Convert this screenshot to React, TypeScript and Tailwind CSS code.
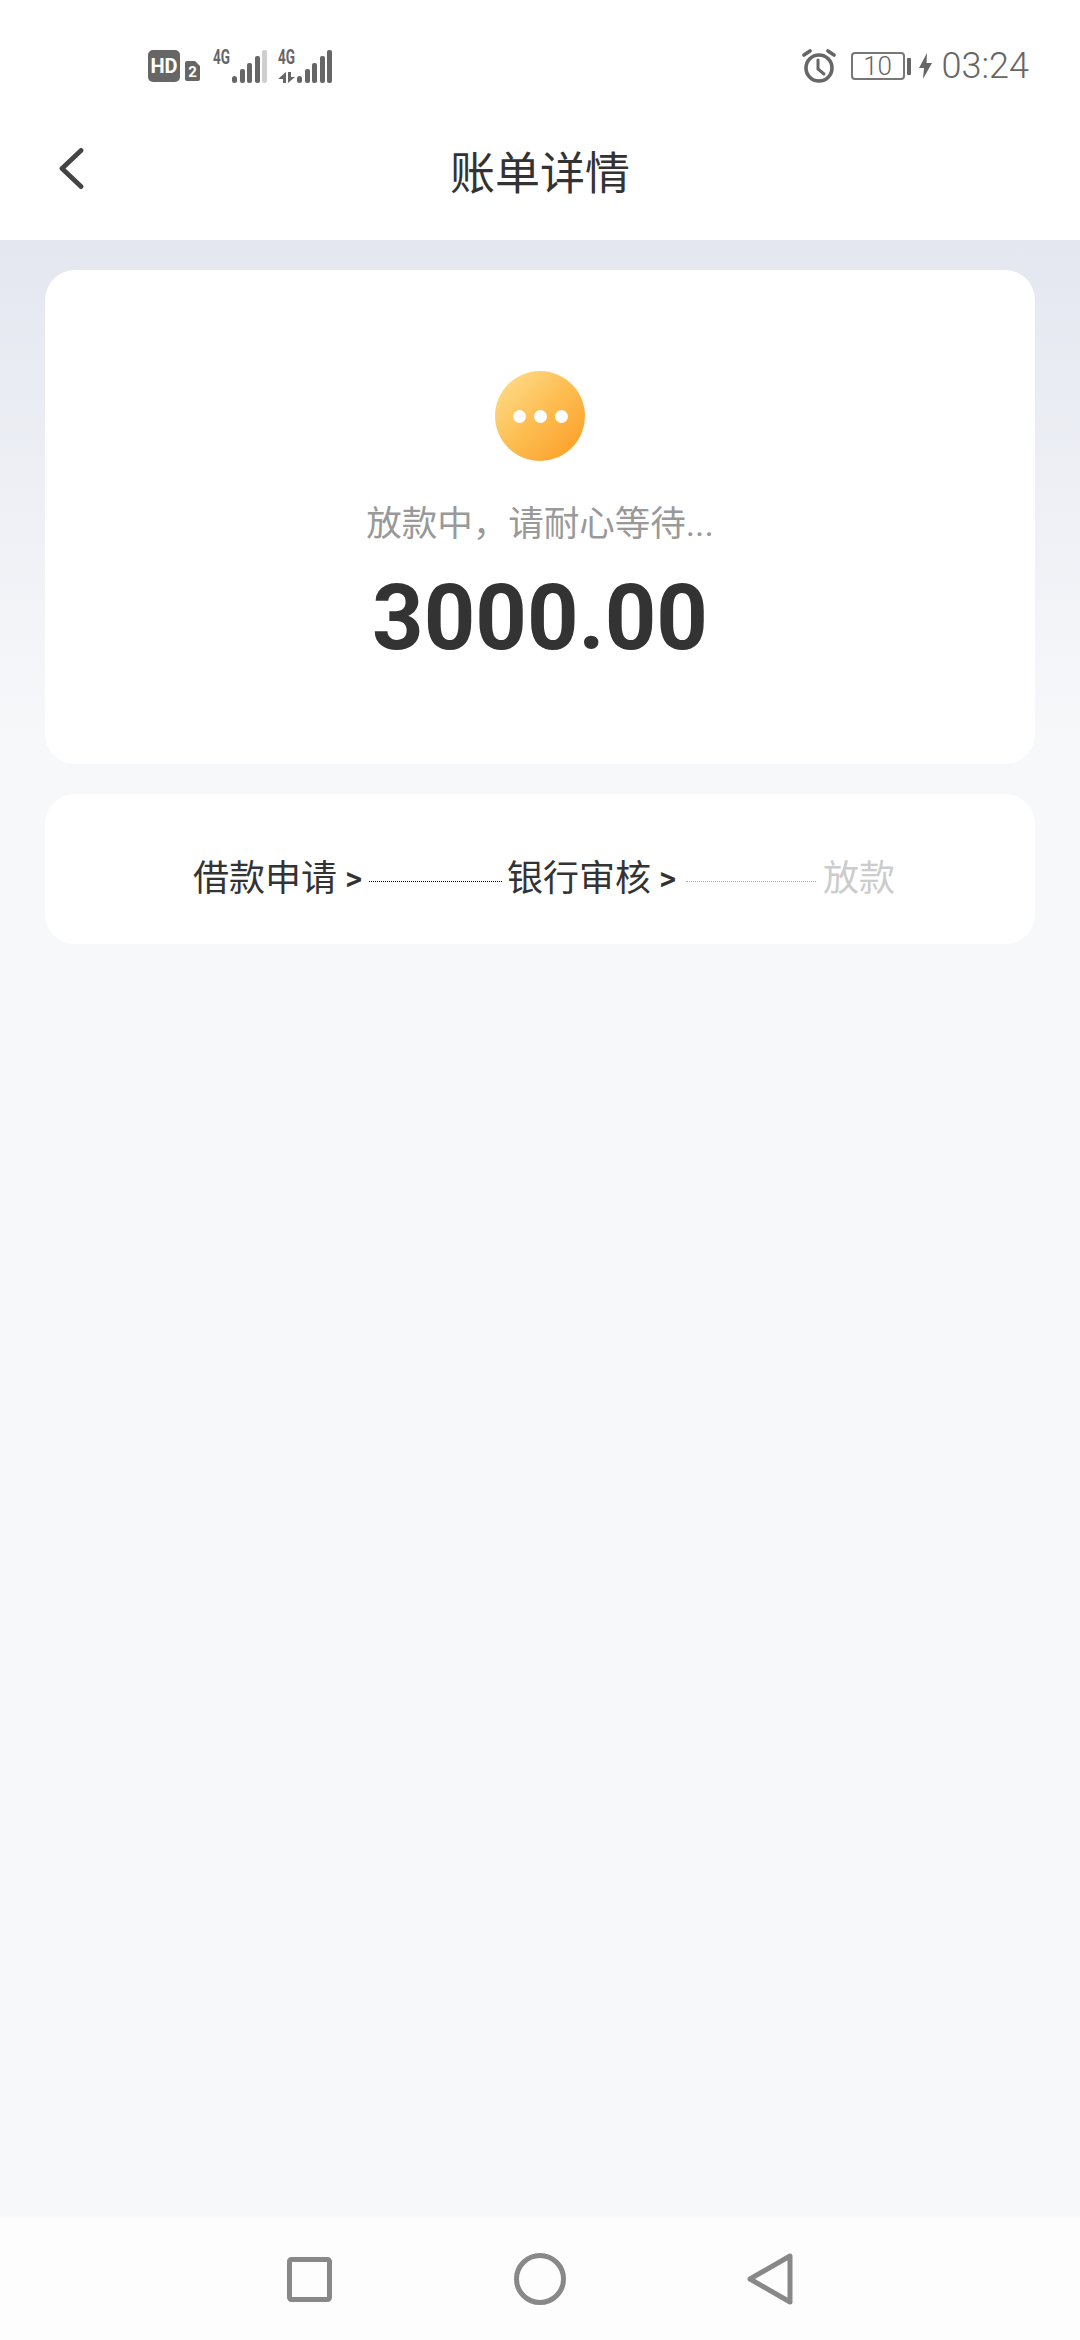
import React from 'react';

const CJK = "font-['Noto_Sans_CJK_SC','Noto_Sans',sans-serif]";

const SignalBars: React.FC<{ lastDim?: boolean; arrows?: boolean }> = ({ lastDim, arrows }) => (
  <svg width="54" height="46" viewBox="0 -4 54 46" fill="none">
    <text x="0" y="17" fontFamily="Roboto, sans-serif" fontSize="20" fontWeight="700" fill="#666" textLength="17" lengthAdjust="spacingAndGlyphs">4G</text>
    {arrows && (
      <g fill="#666">
        <path d="M0 32l8-7v11H5v-4z" />
        <path d="M10 25h3v5h4l-7 6z" />
      </g>
    )}
    <g fill="#666">
      <rect x="19" y="29" width="5" height="7" rx="2.5" />
      <rect x="27" y="22" width="5" height="14" rx="2" />
      <rect x="34" y="16" width="5" height="20" rx="2" />
      <rect x="42" y="9" width="5" height="27" rx="2" />
      <rect x="49" y="3" width="5" height="33" rx="2" fill={lastDim ? '#cfcfcf' : '#666'} />
    </g>
  </svg>
);

const StatusBar: React.FC = () => (
  <div className="flex h-[132px] items-center justify-between pl-[148px] pr-[51px]">
    <div className="flex items-center">
      <svg width="52" height="34" viewBox="0 0 52 34">
        <rect x="0" y="1" width="32" height="32" rx="5" fill="#666" />
        <text x="16" y="24" textAnchor="middle" fontFamily="Roboto, sans-serif" fontSize="20" fontWeight="700" fill="#fff">HD</text>
        <path d="M39 12h8l5 5v13a2 2 0 0 1-2 2H39a2 2 0 0 1-2-2V14a2 2 0 0 1 2-2z" fill="#666" />
        <text x="44.5" y="28" textAnchor="middle" fontFamily="Roboto, sans-serif" fontSize="15" fontWeight="700" fill="#fff">2</text>
      </svg>
      <div className="ml-[13px] flex gap-[11px]">
        <SignalBars lastDim />
        <SignalBars arrows />
      </div>
    </div>
    <div className="flex items-center">
      <svg width="34" height="34" viewBox="0 0 34 34" fill="none" stroke="#666" strokeWidth="3.6" strokeLinecap="round">
        <circle cx="17" cy="19" r="13" />
        <path d="M16 11v9l6 5" strokeWidth="3" />
        <path d="M2 6l6-4M32 6l-6-4" />
      </svg>
      <div className="ml-[15px] flex h-[28px] w-[54px] items-center justify-center rounded-[4px] border-2 border-[#777] font-['Roboto',sans-serif] text-[26px] font-light leading-none text-[#666]">
        10
      </div>
      <div className="ml-[2px] h-[17px] w-[4px] rounded-[1px] bg-[#666]" />
      <svg className="ml-[8px]" width="13" height="26" viewBox="0 0 13 26" fill="#666">
        <path d="M8 0L0 15h5l-1 11 9-16H7.5z" />
      </svg>
      <span className="ml-[10px] font-['Roboto',sans-serif] text-[36px] font-light leading-none text-[#666]">03:24</span>
    </div>
  </div>
);

const Header: React.FC = () => (
  <div className="relative flex h-[108px] items-center justify-center pb-[32px]">
    <svg className="absolute left-[58px] top-[16px]" width="27" height="41" viewBox="0 0 27 41" fill="none">
      <path d="M23 2.5L4 20.5 23 38.5" stroke="#444" strokeWidth="4.8" strokeLinecap="round" strokeLinejoin="round" />
    </svg>
    <h1 className={`${CJK} text-[45px] font-normal leading-none text-[#333]`}>账单详情</h1>
  </div>
);

const Step: React.FC<{ label: string; muted?: boolean; arrow?: boolean }> = ({ label, muted, arrow }) => (
  <div className="flex items-center">
    <span className={`${CJK} text-[36px] leading-none ${muted ? 'text-[#ccc]' : 'text-[#333]'}`}>{label}</span>
    {arrow && <span className="ml-[8px] mt-[6px] w-[18px] font-['Roboto',sans-serif] text-[33px] font-medium leading-none text-[#333]">&gt;</span>}
  </div>
);

const NavBar: React.FC = () => (
  <div className="flex h-[122px] items-center bg-[#fdfdfd] pl-[287px]">
    <svg width="45" height="45" viewBox="0 0 45 45" fill="none">
      <rect x="2.5" y="2.5" width="40" height="40" rx="2" stroke="#888" strokeWidth="5" />
    </svg>
    <svg className="ml-[182px]" width="52" height="52" viewBox="0 0 52 52" fill="none">
      <circle cx="26" cy="26" r="23.5" stroke="#888" strokeWidth="5" />
    </svg>
    <svg className="ml-[181px]" width="46" height="52" viewBox="0 0 46 52" fill="none">
      <path d="M43 3v46L3 26z" stroke="#888" strokeWidth="5" strokeLinejoin="round" />
    </svg>
  </div>
);

export default function App() {
  return (
    <div className="flex h-[2340px] w-[1080px] flex-col bg-white">
      <StatusBar />
      <Header />

      <main className="flex flex-1 flex-col gap-[30px] bg-[linear-gradient(to_bottom,#e4e7f0_0px,#f7f8fa_500px)] px-[45px] pt-[30px]">
        <section className="flex h-[494px] flex-col items-center rounded-[30px] bg-white pt-[101px]">
          <div className="flex h-[90px] w-[90px] items-center justify-center gap-[8px] rounded-full bg-gradient-to-br from-[#fee08f] via-[#fdbd50] to-[#fb9a1a]">
            <span className="h-[13px] w-[13px] rounded-full bg-white" />
            <span className="h-[13px] w-[13px] rounded-full bg-white" />
            <span className="h-[13px] w-[13px] rounded-full bg-white" />
          </div>
          <p className="mt-[46px] font-['Roboto','Noto_Sans_CJK_SC',sans-serif] text-[35.5px] leading-none text-[#999]">放款中，请耐心等待...</p>
          <p className="mt-[31px] font-['Roboto',sans-serif] text-[90px] font-bold leading-none text-[#333]">3000.00</p>
        </section>

        <section className="flex h-[150px] items-center rounded-[30px] bg-white pl-[148px] pt-[12px]">
          <Step label="借款申请" arrow />
          <div className="ml-[6px] mr-[5px] mt-[12px] w-[133px] border-t border-dotted border-black" />
          <Step label="银行审核" arrow />
          <div className="ml-[9px] mr-[7px] mt-[12px] w-[130px] border-t border-dotted border-[#aaa]" />
          <Step label="放款" muted />
        </section>
      </main>

      <NavBar />
    </div>
  );
}
